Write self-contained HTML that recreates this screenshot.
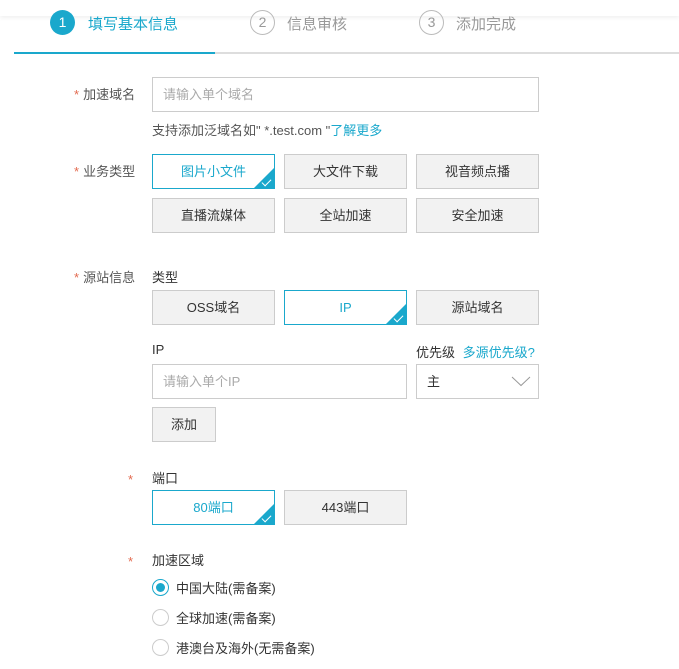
<!DOCTYPE html>
<html><head><meta charset="utf-8"><style>
*{box-sizing:border-box;margin:0;padding:0}
body{width:679px;height:669px;background:#fff;position:relative;overflow:hidden;font-family:"Liberation Sans","Noto Sans CJK SC",sans-serif;font-size:13px;color:#333}
.a{position:absolute}
.top{left:0;top:0;width:679px;height:16px;background:#fff;box-shadow:0 2px 4px rgba(0,0,0,.06)}
.step{font-size:15px;color:#999;top:13px}
.circ{width:25px;height:25px;border-radius:50%;border:1px solid #bbb;color:#999;text-align:center;line-height:23px;font-size:14px}
.lab{color:#555;font-size:13px}
.star{color:#e36a4f;margin-right:4px}
.btn{height:35px;background:#f2f2f2;border:1px solid #ccc;text-align:center;line-height:33px;color:#333;width:123px;overflow:hidden}
.sel{background:#fff;border-color:#1aa8cc;color:#1aa8cc}
.sel:after{content:"";position:absolute;right:0;bottom:0;border-style:solid;border-width:0 0 20px 20px;border-color:transparent transparent #1aa8cc transparent}
.chk{position:absolute;right:3px;bottom:4px;width:9px;height:5px;border-left:1.5px solid #fff;border-bottom:1.5px solid #fff;transform:rotate(-45deg);z-index:2}
.inp{border:1px solid #ccc;height:35px;line-height:33px;padding-left:10px;color:#aaa}
.rad{width:17px;height:17px;border-radius:50%;border:1px solid #ccc}
</style></head><body>
<div class="a top"></div>
<div class="a" style="left:50px;top:10px;width:25px;height:25px;border-radius:50%;background:#1aa8cc;color:#fff;text-align:center;line-height:25px;font-size:14px">1</div>
<div class="a step" style="left:88px;color:#1aa8cc">填写基本信息</div>
<div class="a circ" style="left:250px;top:10px">2</div>
<div class="a step" style="left:287px">信息审核</div>
<div class="a circ" style="left:419px;top:10px">3</div>
<div class="a step" style="left:456px">添加完成</div>
<div class="a" style="left:14px;top:52px;width:665px;height:2px;background:#ddd"></div>
<div class="a" style="left:14px;top:52px;width:201px;height:2px;background:#1aa8cc"></div>

<div class="a lab" style="left:74px;top:84px"><span class="star">*</span>加速域名</div>
<div class="a inp" style="left:152px;top:77px;width:387px">请输入单个域名</div>
<div class="a" style="left:152px;top:120px;color:#555">支持添加泛域名如" *.test.com "<span style="color:#1aa8cc">了解更多</span></div>

<div class="a lab" style="left:74px;top:161px"><span class="star">*</span>业务类型</div>
<div class="a btn sel" style="left:152px;top:154px">图片小文件<i class="chk"></i></div>
<div class="a btn" style="left:284px;top:154px">大文件下载</div>
<div class="a btn" style="left:416px;top:154px">视音频点播</div>
<div class="a btn" style="left:152px;top:198px">直播流媒体</div>
<div class="a btn" style="left:284px;top:198px">全站加速</div>
<div class="a btn" style="left:416px;top:198px">安全加速</div>

<div class="a lab" style="left:74px;top:267px"><span class="star">*</span>源站信息</div>
<div class="a" style="left:152px;top:267px">类型</div>
<div class="a btn" style="left:152px;top:290px">OSS域名</div>
<div class="a btn sel" style="left:284px;top:290px">IP<i class="chk"></i></div>
<div class="a btn" style="left:416px;top:290px">源站域名</div>
<div class="a" style="left:152px;top:342px">IP</div>
<div class="a" style="left:416px;top:342px">优先级 <span style="color:#1aa8cc;margin-left:4px">多源优先级?</span></div>
<div class="a inp" style="left:152px;top:364px;width:255px">请输入单个IP</div>
<div class="a inp" style="left:416px;top:364px;width:123px;color:#333">主
<svg class="a" style="left:94px;top:11px" width="20" height="11" viewBox="0 0 20 11"><path d="M1 1L10 9.5L19 1" fill="none" stroke="#999" stroke-width="1"/></svg></div>
<div class="a btn" style="left:152px;top:407px;width:64px">添加</div>

<div class="a" style="left:128px;top:472px;color:#e36a4f">*</div>
<div class="a" style="left:152px;top:468px">端口</div>
<div class="a btn sel" style="left:152px;top:490px">80端口<i class="chk"></i></div>
<div class="a btn" style="left:284px;top:490px">443端口</div>

<div class="a" style="left:128px;top:554px;color:#e36a4f">*</div>
<div class="a" style="left:152px;top:550px">加速区域</div>
<div class="a rad" style="left:152px;top:579px;border-color:#1aa8cc"><div style="width:9px;height:9px;border-radius:50%;background:#1aa8cc;margin:3px"></div></div>
<div class="a" style="left:176px;top:578px">中国大陆(需备案)</div>
<div class="a rad" style="left:152px;top:609px"></div>
<div class="a" style="left:176px;top:608px">全球加速(需备案)</div>
<div class="a rad" style="left:152px;top:639px"></div>
<div class="a" style="left:176px;top:638px">港澳台及海外(无需备案)</div>
</body></html>
